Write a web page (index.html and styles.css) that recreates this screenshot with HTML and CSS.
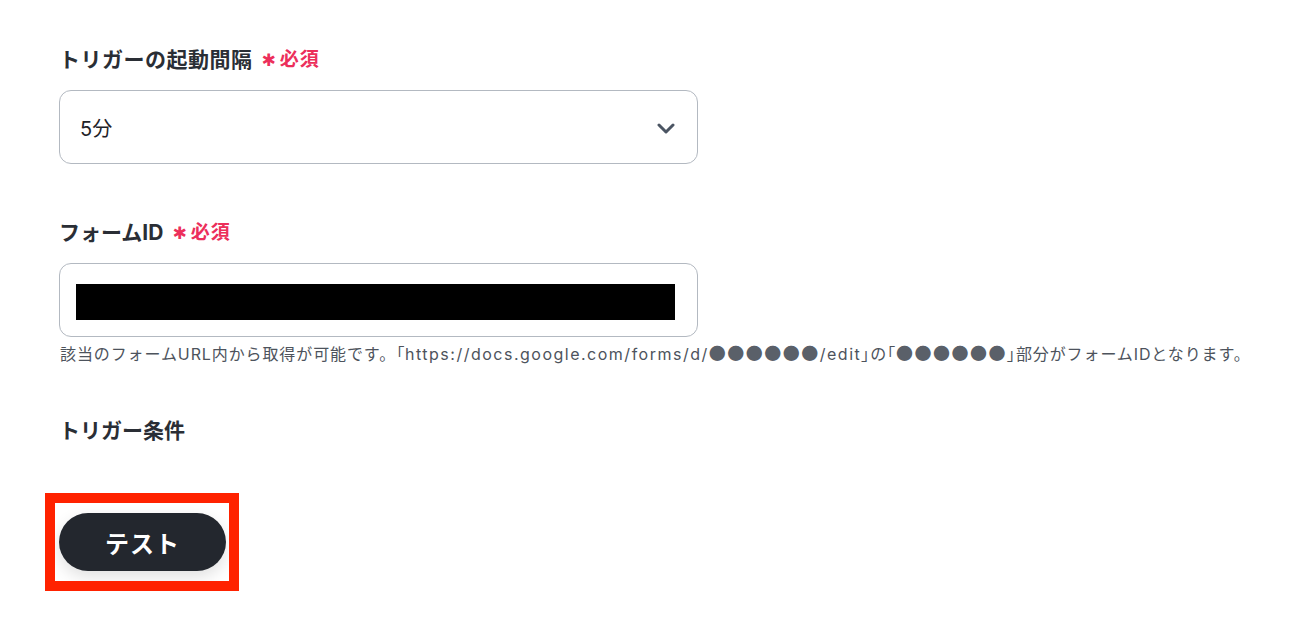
FILE: index.html
```html
<!DOCTYPE html>
<html lang="ja">
<head>
<meta charset="utf-8">
<link rel="stylesheet" href="styles.css">
</head>
<body>
<main class="form">
  <section class="field">
    <div class="label label-wide">トリガーの起動間隔<span class="req"><span class="ast">✱</span>必須</span></div>
    <div class="control select">
      <span class="value">5分</span>
      <svg class="chev" width="18" height="12" viewBox="0 0 18 12"><path d="M2 2 L9 9 L16 2" fill="none" stroke="#4b5563" stroke-width="3" stroke-linecap="round" stroke-linejoin="round"/></svg>
    </div>
  </section>
  <section class="field field2">
    <div class="label">フォームID<span class="req"><span class="ast">✱</span>必須</span></div>
    <div class="control input"><div class="redact"></div></div>
    <p class="help">該当のフォームURL内から取得が可能です。<span class="br">「</span><span class="latin">https://docs.google.com/forms/d/</span><span class="dots">●●●●●●</span><span class="latin">/edit</span><span class="br">」</span>の<span class="br">「</span><span class="dots">●●●●●●</span><span class="br">」</span>部分がフォームIDとなります。</p>
  </section>
  <section class="field field3">
    <div class="label">トリガー条件</div>
  </section>
  <div class="actions">
    <button class="btn">テスト</button>
    <div class="highlight"></div>
  </div>
</main>
</body>
</html>
```
FILE: styles.css
```css
* { box-sizing: border-box; }
html, body { margin: 0; padding: 0; background: #fff; }
body {
  font-family: Inter, "Noto Sans CJK JP", sans-serif;
  color: #2a2e35;
  min-height: 620px;
}
.form {
  padding: 44px 0 60px 59px;
  width: 1292px;
  min-height: 620px;
}
.field { display: flex; flex-direction: column; }
.label {
  font-size: 21px;
  font-weight: 700;
  line-height: 32px;
  height: 32px;
  display: flex;
  align-items: center;
}
.label-wide { letter-spacing: 0.5px; }
.req {
  color: #ec2f5b;
  font-size: 19px;
  font-weight: 700;
  margin-left: 9px;
  display: flex;
  align-items: center;
  letter-spacing: 1px;
}
.ast { font-size: 17px; margin-right: 3px; font-family: "DejaVu Sans", sans-serif; }
.control {
  margin-top: 14px;
  width: 639px;
  height: 74px;
  border: 1px solid #b3b9c1;
  border-radius: 12px;
  display: flex;
  align-items: center;
}
.select { padding: 0 22px 0 20px; justify-content: space-between; }
.value { font-size: 20px; color: #1f2328; font-weight: 400; }
.chev { margin-top: 4px; }
.field2 { margin-top: 53px; }
.input { padding: 0 22px 0 16px; }
.redact { width: 599px; height: 36px; background: #000; margin-top: 3px; }
.help {
  margin: 2px 0 0 1px;
  font-size: 16px;
  line-height: 28px;
  height: 28px;
  color: #4d535c;
  letter-spacing: 0.9px;
  white-space: nowrap;
}
.latin { letter-spacing: 1.5px; }
.br { font-feature-settings: "palt"; font-family: "Noto Sans CJK JP", sans-serif; }
.dots {
  font-family: "Noto Sans CJK JP", sans-serif;
  color: #5a6069;
  font-size: 17px;
  line-height: 16px;
  letter-spacing: 1.5px;
}
.field3 { margin-top: 48px; }
.actions {
  position: relative;
  margin-top: 66px;
  width: 167px;
}
.btn {
  display: block;
  width: 167px;
  height: 58px;
  border: none;
  border-radius: 29px;
  background: #23272e;
  color: #fff;
  font-family: Inter, "Noto Sans CJK JP", sans-serif;
  font-size: 24px;
  font-weight: 700;
  letter-spacing: 1px;
  box-shadow: 0 6px 16px rgba(0,0,0,0.12);
}
.highlight {
  position: absolute;
  left: -14px;
  top: -20px;
  width: 194px;
  height: 98px;
  border: 10px solid #ff2200;
  pointer-events: none;
}
```
